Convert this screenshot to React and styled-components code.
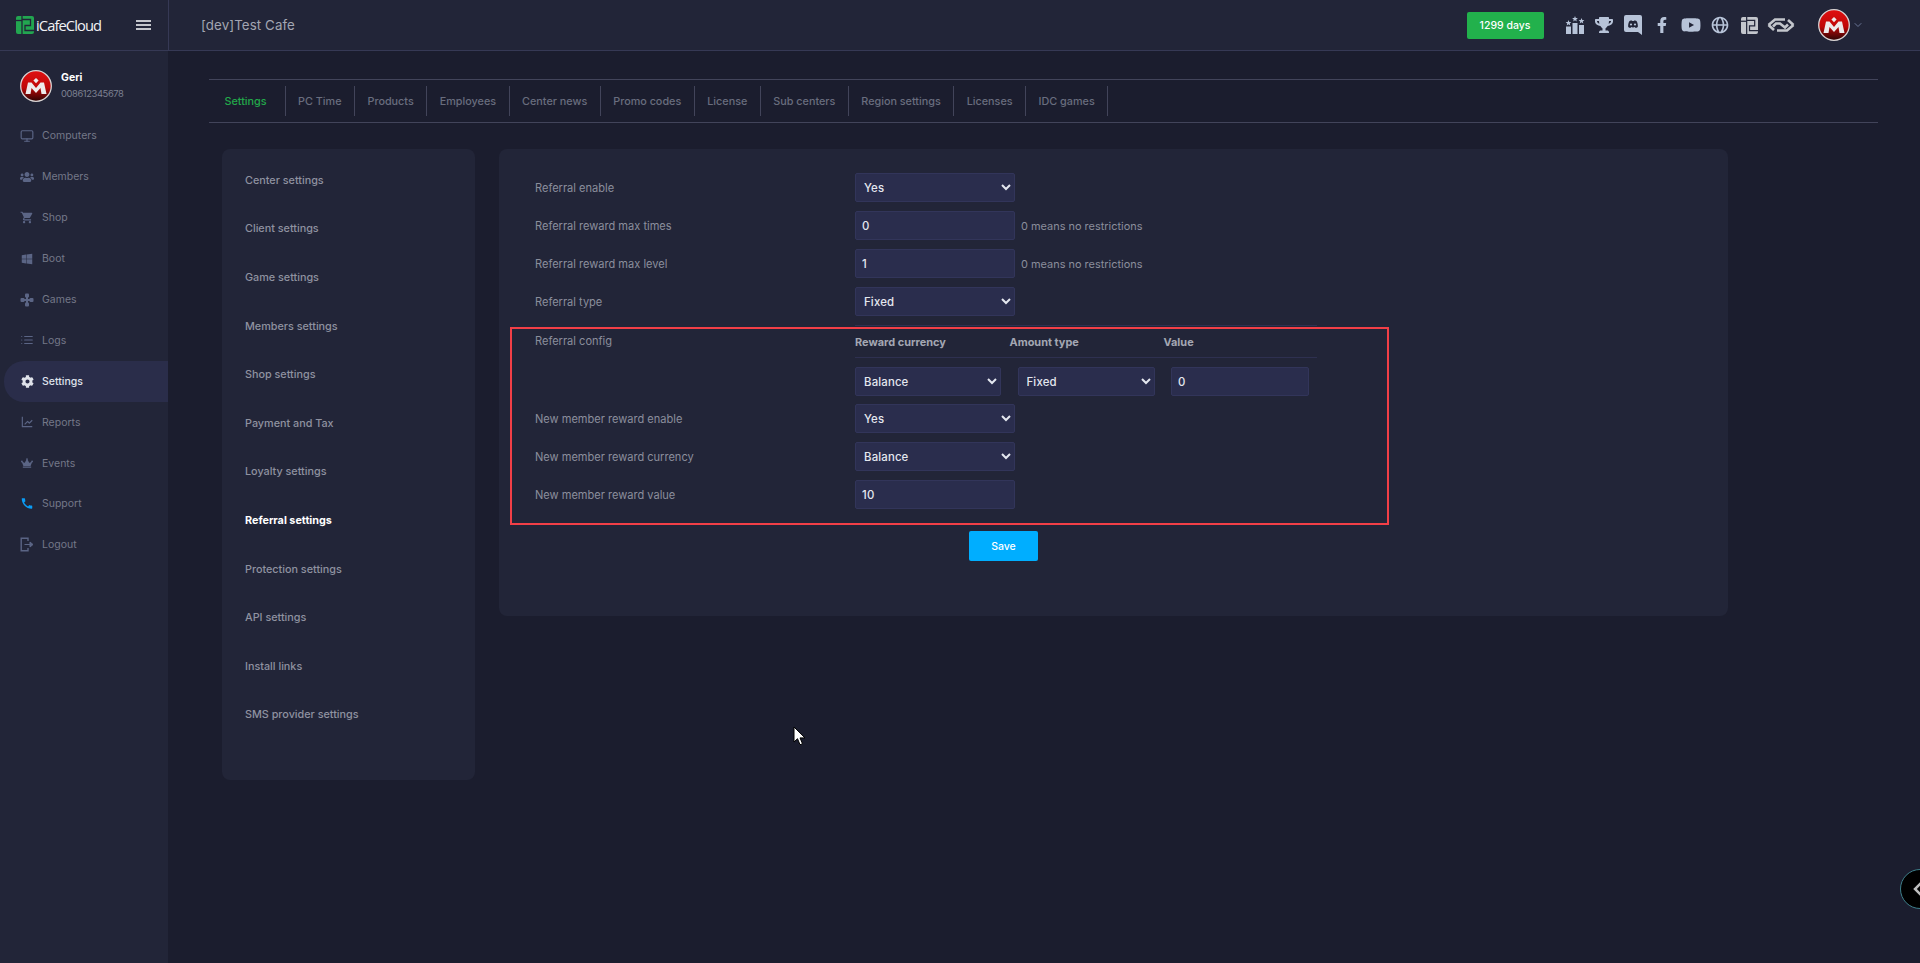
import styled, { createGlobalStyle } from "styled-components";
import { FaUsers, FaWindows, FaCog, FaCrown, FaTrophy, FaFacebookF, FaYoutube } from "react-icons/fa";
import { MdShoppingCart, MdCall } from "react-icons/md";
import { FiMonitor, FiList, FiChevronDown } from "react-icons/fi";
import { BiLineChart, BiGlobe } from "react-icons/bi";

const FONT = `Inter, "Open Sans", sans-serif`;

const GlobalStyle = createGlobalStyle`
  html, body { margin: 0; padding: 0; height: 100%; background: #1b1d2e; overflow: hidden; }
  body { font-family: ${FONT}; }
  * { box-sizing: border-box; }
`;

const Page = styled.div`
  position: relative;
  width: 1920px;
  height: 963px;
  display: flex;
  flex-direction: column;
  overflow: hidden;
`;

const Header = styled.header`
  height: 51px;
  flex: none;
  display: flex;
  align-items: center;
  background: #222538;
  border-bottom: 1px solid #363955;
`;

const Brand = styled.div`
  width: 169px;
  height: 50px;
  flex: none;
  display: flex;
  align-items: center;
  padding-left: 16px;
  border-right: 1px solid #363955;
`;

const BrandName = styled.span`
  margin-left: 2px;
  font-family: "Open Sans", sans-serif;
  font-size: 14.7px;
  font-weight: 500;
  letter-spacing: -0.9px;
  color: #f1f2f5;
`;

const Burger = styled.div`
  margin-left: 35px;
  width: 15px;
  height: 10px;
  border-top: 2px solid #c4c6cc;
  border-bottom: 2px solid #c4c6cc;
  position: relative;
  &::after {
    content: "";
    position: absolute;
    left: 0;
    right: 0;
    top: 2px;
    height: 2px;
    background: #c4c6cc;
  }
`;

const CafeTitle = styled.div`
  margin-left: 32px;
  margin-top: -1px;
  font-size: 13.3px;
  color: #a3a6b2;
  letter-spacing: 0.1px;
`;

const HeaderRight = styled.div`
  margin-left: auto;
  display: flex;
  align-items: center;
  padding-right: 56px;
`;

const DaysBadge = styled.div`
  width: 77px;
  height: 27px;
  margin-right: 17px;
  display: flex;
  align-items: center;
  justify-content: center;
  background: #22b14c;
  border-radius: 2px;
  color: #fff;
  font-size: 10.5px;
  font-weight: 500;
`;

const TopIcons = styled.div`
  display: flex;
  align-items: center;
  color: #b7c3d8;
`;

const TopIcon = styled.span`
  width: ${(p) => p.$w || 29}px;
  display: flex;
  justify-content: center;
  align-items: center;
  color: ${(p) => p.$color || "#b7c3d8"};
`;

const ProfileMenu = styled.div`
  margin-left: 20px;
  display: flex;
  align-items: center;
  gap: 2px;
  color: #6a7596;
`;

const Body = styled.div`
  flex: 1;
  display: flex;
  min-height: 0;
`;

const Sidebar = styled.aside`
  width: 168px;
  flex: none;
  background: #222538;
  padding-top: 19px;
`;

const UserBox = styled.div`
  display: flex;
  align-items: center;
  gap: 9px;
  padding-left: 20px;
  margin-bottom: 13.5px;
`;

const UserName = styled.div`
  font-size: 10.5px;
  font-weight: 700;
  color: #fff;
  line-height: 16px;
`;

const UserPhone = styled.div`
  font-size: 9.4px;
  letter-spacing: -0.4px;
  color: #7d8192;
  line-height: 16px;
`;

const NavList = styled.nav`
  display: flex;
  flex-direction: column;
`;

const NavItem = styled.div`
  height: 40.9px;
  margin-left: 4px;
  padding-left: 16px;
  display: flex;
  align-items: center;
  gap: 8px;
  border-radius: 20px 0 0 20px;
  font-size: 10.5px;
  color: ${(p) => (p.$active ? "#dfe2ea" : "#747888")};
  font-weight: ${(p) => (p.$active ? 500 : 400)};
  background: ${(p) => (p.$active ? "#2a2d4a" : "transparent")};
`;

const NavIcon = styled.span`
  width: 14px;
  display: flex;
  justify-content: center;
  color: ${(p) => p.$color || (p.$active ? "#dfe2ea" : "#5b6585")};
`;

const Main = styled.main`
  flex: 1;
  padding: 28px 42px 0 41px;
  min-width: 0;
`;

const Tabs = styled.div`
  height: 44px;
  display: flex;
  align-items: center;
  padding-left: 3px;
  border-top: 1px solid #42445a;
  border-bottom: 1px solid #42445a;
`;

const Tab = styled.div`
  height: 30px;
  display: flex;
  align-items: center;
  padding: 0 12.5px;
  padding-right: ${(p) => (p.$active ? 18 : 12.5)}px;
  border-right: 1px solid #42445a;
  font-size: 10.8px;
  font-weight: 500;
  white-space: nowrap;
  color: ${(p) => (p.$active ? "#22a84a" : "#696d7e")};
`;

const Content = styled.div`
  margin-top: 26px;
  margin-left: 13px;
  display: flex;
  align-items: flex-start;
  gap: 24px;
`;

const SettingsMenu = styled.div`
  width: 253px;
  height: 631px;
  padding: 7px 0 0 23px;
  background: #222538;
  border-radius: 8px;
`;

const MenuItem = styled.div`
  height: 48.6px;
  display: flex;
  align-items: center;
  font-size: 10.8px;
  font-weight: ${(p) => (p.$active ? 700 : 500)};
  color: ${(p) => (p.$active ? "#fff" : "#8f92a0")};
`;

const FormPanel = styled.div`
  width: 1229px;
  height: 467px;
  padding: 24px 11px 0;
  background: #222538;
  border-radius: 8px;
`;

const Row = styled.div`
  display: flex;
  align-items: center;
  min-height: 29px;
  margin-bottom: ${(p) => p.$gap ?? 9}px;
  padding-left: ${(p) => (p.$inset ? 23 : 25)}px;
`;

const RowLabel = styled.div`
  width: 320px;
  flex: none;
  padding-top: 1px;
  font-size: 11.05px;
  color: #8b8e9c;
`;

const Hint = styled.span`
  margin-left: 6px;
  padding-top: 1px;
  font-size: 10.95px;
  color: #8b8e9c;
`;

const fieldStyle = `
  height: 29px;
  background: #2a2d4d;
  border: 1px solid #32355a;
  border-radius: 2px;
  color: #e4e7ef;
  font-family: ${FONT};
  font-size: 11.4px;
  font-weight: 500;
  letter-spacing: 0.15px;
  outline: none;
`;

const Select = styled.select`
  ${fieldStyle}
  width: ${(p) => p.$w || 160}px;
  padding: 0 0 0 4px;
`;

const Input = styled.input`
  ${fieldStyle}
  width: ${(p) => p.$w || 160}px;
  padding: 0 6px;
`;

const Highlight = styled.div`
  width: 879px;
  height: 198px;
  margin-top: 11px;
  border: 2px solid #f23f47;
`;

const ConfigRow = styled.div`
  display: flex;
  padding-left: 23px;
  height: 38px;
`;

const ConfigLabel = styled(RowLabel)`
  padding-top: 5px;
`;

const ConfigTable = styled.div`
  position: relative;
  width: 462px;
  height: 29px;
  padding-bottom: 3px;
  display: flex;
  align-items: center;
  border-bottom: 1px solid #2e3050;
  &::before {
    content: "";
    position: absolute;
    left: 0;
    right: 0;
    top: -4px;
    height: 1px;
    background: #2e3050;
  }
`;

const ConfigHead = styled.div`
  width: ${(p) => p.$w}px;
  flex: none;
  font-size: 10.95px;
  font-weight: 700;
  color: #a4a7b3;
`;

const ConfigFields = styled.div`
  display: flex;
  gap: 16.5px;
`;

const SaveRow = styled.div`
  width: 879px;
  margin-top: 6px;
  padding-left: 459px;
`;

const SaveButton = styled.button`
  width: 69px;
  height: 30px;
  border: 0;
  border-radius: 2px;
  background: #00aeff;
  color: #fff;
  font-family: ${FONT};
  font-size: 10.5px;
  font-weight: 500;
`;

const Cursor = styled.svg`
  position: absolute;
  left: 793px;
  top: 726px;
`;

const FloatButton = styled.div`
  position: absolute;
  left: 1900px;
  top: 869px;
  width: 40px;
  height: 40px;
  border-radius: 50%;
  background: #000;
  border: 1px solid #3e7f8a;
  display: flex;
  align-items: center;
  padding-left: 12px;
  color: #bdbdbd;
`;

const LogoMark = ({ size = 18, color = "#22a650", cut = "#222538" }) => (
  <svg width={size} height={size} viewBox="0 0 18 18">
    <rect width="18" height="18" rx="2" fill={color} />
    <g fill="none" stroke={cut} strokeWidth="1.3">
      <path d="M6 0v18" />
      <path d="M0 4.500h6" />
      <path d="M6 3.500h8.500v6H9v5h9" />
    </g>
  </svg>
);

const Avatar = ({ id, size = 32 }) => (
  <svg width={size} height={size} viewBox="0 0 32 32">
    <defs>
      <linearGradient id={id} x1="0" y1="0" x2="0" y2="1">
        <stop offset="0" stopColor="#e01010" />
        <stop offset="0.55" stopColor="#c00808" />
        <stop offset="1" stopColor="#2c0404" />
      </linearGradient>
    </defs>
    <circle cx="16" cy="16" r="15.3" fill={`url(#${id})`} stroke="#d9d4d4" strokeWidth="1.3" />
    <path d="M5.500 24 8 12.500h3.500L16 18l4.500-5.500H24L26.500 24h-5l-1-6-4.500 5-4.500-5-1 6z" fill="#eeeaea" />
    <path d="M16 8l2.600 2.600L16 13.200l-2.600-2.600z" fill="#eeeaea" />
  </svg>
);

const GamesIcon = () => (
  <svg width="14" height="14" viewBox="0 0 14 14" fill="currentColor">
    <rect x="5" y="0.500" width="4" height="4" rx="1" />
    <rect x="5" y="9.500" width="4" height="4" rx="1" />
    <rect x="0.500" y="5" width="4" height="4" rx="1" />
    <rect x="9.500" y="5" width="4" height="4" rx="1" />
    <rect x="6" y="4" width="2" height="6" />
    <rect x="4" y="6" width="6" height="2" />
  </svg>
);

const LogoutIcon = () => (
  <svg width="14" height="15" viewBox="0 0 14 15" fill="none" stroke="currentColor" strokeWidth="1.4">
    <path d="M8 4V1.200H1.200v12.600H8V11" />
    <path d="M4.500 7.500h5.500V5l3 2.500-3 2.500V7.500" fill="currentColor" strokeWidth="1" />
  </svg>
);

const starPoints = (cx, cy, r) =>
  Array.from({ length: 10 }, (_, i) => {
    const a = (Math.PI / 5) * i - Math.PI / 2;
    const d = i % 2 ? r * 0.45 : r;
    return `${cx + d * Math.cos(a)},${cy + d * Math.sin(a)}`;
  }).join(" ");

const PodiumIcon = () => (
  <svg width="20" height="18" viewBox="0 0 20 18" fill="currentColor">
    <rect x="1" y="10.500" width="5" height="7.500" />
    <rect x="7.500" y="7" width="5" height="11" />
    <rect x="14" y="9" width="5" height="9" />
    <polygon points={starPoints(3.500, 7, 3)} />
    <polygon points={starPoints(10, 3, 3)} />
    <polygon points={starPoints(16.500, 5, 3)} />
  </svg>
);

const DiscordIcon = () => (
  <svg width="18" height="20" viewBox="0 0 18 20">
    <path d="M2 0h14a2 2 0 0 1 2 2v18l-4-3H2a2 2 0 0 1-2-2V2a2 2 0 0 1 2-2z" fill="currentColor" />
    <path d="M4.200 12c-.3-2.700.5-4.800 1.300-6 1-.5 1.800-.6 2.300-.6l.3.6h1.800l.3-.6c.5 0 1.300.1 2.300.6.8 1.200 1.600 3.300 1.300 6-.8.6-1.700.9-2.300 1l-.5-.9c-1.300.4-2.700.4-4 0l-.5.9c-.6-.1-1.500-.4-2.300-1z" fill="#222538" />
    <circle cx="7" cy="9.500" r="1.100" fill="#b7c3d8" />
    <circle cx="11" cy="9.500" r="1.100" fill="#b7c3d8" />
  </svg>
);

const SwirlIcon = () => (
  <svg width="28" height="14" viewBox="0 0 28 14" fill="none" stroke="#c3c6cc" strokeWidth="2.600">
    <path d="M1.500 7 8 1.500h10" />
    <path d="M1.500 7 7 12" />
    <path d="M26.500 7 20 12.500H10" />
    <path d="M26.500 7 21 2" />
    <path d="M6 8.500 9 5.500h4l5 4 3-3" />
  </svg>
);

const navItems = [
  ["Computers", <FiMonitor size={14} />],
  ["Members", <FaUsers size={14} />],
  ["Shop", <MdShoppingCart size={15} />],
  ["Boot", <FaWindows size={12} />],
  ["Games", <GamesIcon />],
  ["Logs", <FiList size={14} />],
  ["Settings", <FaCog size={13} />],
  ["Reports", <BiLineChart size={14} />],
  ["Events", <FaCrown size={12} />],
  ["Support", <MdCall size={15} />],
  ["Logout", <LogoutIcon />],
];

const tabs = [
  "Settings", "PC Time", "Products", "Employees", "Center news", "Promo codes",
  "License", "Sub centers", "Region settings", "Licenses", "IDC games",
];

const menuItems = [
  "Center settings", "Client settings", "Game settings", "Members settings",
  "Shop settings", "Payment and Tax", "Loyalty settings", "Referral settings",
  "Protection settings", "API settings", "Install links", "SMS provider settings",
];

const ChoiceSelect = ({ value, options, w }) => (
  <Select defaultValue={value} $w={w}>
    {options.map((o) => (
      <option key={o}>{o}</option>
    ))}
  </Select>
);

const yesNo = ["Yes", "No"];
const amountTypes = ["Fixed", "Percent"];
const currencies = ["Balance", "Coin"];

export default function App() {
  return (
    <Page>
      <GlobalStyle />
      <Header>
        <Brand>
          <LogoMark />
          <BrandName>iCafeCloud</BrandName>
          <Burger />
        </Brand>
        <CafeTitle>[dev]Test Cafe</CafeTitle>
        <HeaderRight>
          <DaysBadge>1299 days</DaysBadge>
          <TopIcons>
            <TopIcon><PodiumIcon /></TopIcon>
            <TopIcon><FaTrophy size={18} /></TopIcon>
            <TopIcon><DiscordIcon /></TopIcon>
            <TopIcon><FaFacebookF size={16} /></TopIcon>
            <TopIcon><FaYoutube size={20} /></TopIcon>
            <TopIcon><BiGlobe size={20} /></TopIcon>
            <TopIcon><LogoMark size={17} color="#c3c6cc" /></TopIcon>
            <TopIcon $w={34.5}><SwirlIcon /></TopIcon>
          </TopIcons>
          <ProfileMenu>
            <Avatar id="avatarTop" />
            <FiChevronDown size={12} />
          </ProfileMenu>
        </HeaderRight>
      </Header>
      <Body>
        <Sidebar>
          <UserBox>
            <Avatar id="avatarSide" />
            <div>
              <UserName>Geri</UserName>
              <UserPhone>008612345678</UserPhone>
            </div>
          </UserBox>
          <NavList>
            {navItems.map(([label, icon]) => {
              const active = label === "Settings";
              return (
                <NavItem key={label} $active={active}>
                  <NavIcon $active={active} $color={label === "Support" ? "#0a9cf5" : undefined}>{icon}</NavIcon>
                  {label}
                </NavItem>
              );
            })}
          </NavList>
        </Sidebar>
        <Main>
          <Tabs>
            {tabs.map((t) => (
              <Tab key={t} $active={t === "Settings"}>{t}</Tab>
            ))}
          </Tabs>
          <Content>
            <SettingsMenu>
              {menuItems.map((m) => (
                <MenuItem key={m} $active={m === "Referral settings"}>{m}</MenuItem>
              ))}
            </SettingsMenu>
            <FormPanel>
              <Row>
                <RowLabel>Referral enable</RowLabel>
                <ChoiceSelect value="Yes" options={yesNo} />
              </Row>
              <Row>
                <RowLabel>Referral reward max times</RowLabel>
                <Input defaultValue="0" />
                <Hint>0 means no restrictions</Hint>
              </Row>
              <Row>
                <RowLabel>Referral reward max level</RowLabel>
                <Input defaultValue="1" />
                <Hint>0 means no restrictions</Hint>
              </Row>
              <Row>
                <RowLabel>Referral type</RowLabel>
                <ChoiceSelect value="Fixed" options={amountTypes} />
              </Row>
              <Highlight>
                <ConfigRow>
                  <ConfigLabel>Referral config</ConfigLabel>
                  <ConfigTable>
                    <ConfigHead $w={154.5}>Reward currency</ConfigHead>
                    <ConfigHead $w={154}>Amount type</ConfigHead>
                    <ConfigHead $w={100}>Value</ConfigHead>
                  </ConfigTable>
                </ConfigRow>
                <Row $inset $gap={8}>
                  <RowLabel />
                  <ConfigFields>
                    <ChoiceSelect value="Balance" options={currencies} w={146} />
                    <ChoiceSelect value="Fixed" options={amountTypes} w={137} />
                    <Input defaultValue="0" $w={138} />
                  </ConfigFields>
                </Row>
                <Row $inset>
                  <RowLabel>New member reward enable</RowLabel>
                  <ChoiceSelect value="Yes" options={yesNo} />
                </Row>
                <Row $inset>
                  <RowLabel>New member reward currency</RowLabel>
                  <ChoiceSelect value="Balance" options={currencies} />
                </Row>
                <Row $inset>
                  <RowLabel>New member reward value</RowLabel>
                  <Input defaultValue="10" />
                </Row>
              </Highlight>
              <SaveRow>
                <SaveButton>Save</SaveButton>
              </SaveRow>
            </FormPanel>
          </Content>
        </Main>
      </Body>
      <Cursor width="13" height="20" viewBox="0 0 13 20">
        <path d="M1 1v15l3.500-3.300 2.500 6 2.500-1-2.500-5.800H12z" fill="#fff" stroke="#000" strokeWidth="1" />
      </Cursor>
      <FloatButton>
        <svg width="9" height="14" viewBox="0 0 9 14" fill="none" stroke="currentColor" strokeWidth="2.500">
          <path d="M8 1 2 7l6 6" />
        </svg>
      </FloatButton>
    </Page>
  );
}
